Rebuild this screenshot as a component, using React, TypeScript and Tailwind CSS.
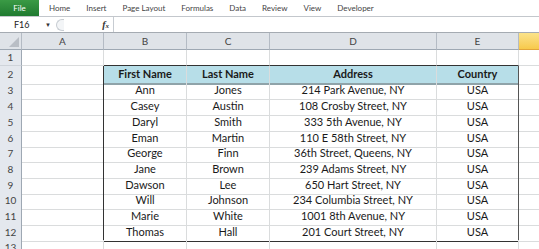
import React from 'react';

const tabs = ['Home', 'Insert', 'Page Layout', 'Formulas', 'Data', 'Review', 'View', 'Developer'];

const rows = [
  ['First Name', 'Last Name', 'Address', 'Country'],
  ['Ann', 'Jones', '214 Park Avenue, NY', 'USA'],
  ['Casey', 'Austin', '108 Crosby Street, NY', 'USA'],
  ['Daryl', 'Smith', '333 5th Avenue, NY', 'USA'],
  ['Eman', 'Martin', '110 E 58th Street, NY', 'USA'],
  ['George', 'Finn', '36th Street, Queens, NY', 'USA'],
  ['Jane', 'Brown', '239 Adams Street, NY', 'USA'],
  ['Dawson', 'Lee', '650 Hart Street, NY', 'USA'],
  ['Will', 'Johnson', '234 Columbia Street, NY', 'USA'],
  ['Marie', 'White', '1001 8th Avenue, NY', 'USA'],
  ['Thomas', 'Hall', '201 Court Street, NY', 'USA'],
];

// row heights in px, rows 1..13 (screenshot is scaled, so not all equal)
const heights = ['h-[16px]', 'h-[16px]', 'h-[16px]', 'h-[16px]', 'h-[16px]', 'h-[15px]', 'h-[16px]', 'h-[16px]', 'h-[15px]', 'h-[16px]', 'h-[16px]', 'h-[16px]', 'h-[16px]'];

const grid = 'grid grid-cols-[22px_82px_83px_83px_167px_82px_1fr]';
const font = { fontFamily: 'Lato, "Open Sans", sans-serif' };

const SheetRow = ({ n }: { n: number }) => {
  const data = n >= 2 && n <= 12 ? rows[n - 2] : null;
  const isHead = n === 2;
  const isLast = n === 12;

  const tableCell = (i: number) => {
    let cls = 'flex items-center justify-center text-[11px] text-[#1a1a1a] border-r ';
    cls += i === 3 ? 'border-r-[#555] ' : 'border-r-[#dadcdd] ';
    if (isHead) cls += 'bg-[#b7dee8] font-bold border-b-2 border-b-[#8fa3a9] ';
    else if (isLast) cls += 'border-b border-b-[#333] ';
    else cls += 'border-b border-b-[#dadcdd] ';
    return cls;
  };

  return (
    <div className={`${grid} ${heights[n - 1]}`}>
      <div className="flex items-center justify-center bg-[#e4e8ee] border-r border-r-[#9ea8b3] border-b border-b-[#cfd4da] text-[10px] text-[#444]">
        {n}
      </div>
      <div className={`border-b border-b-[#dadcdd] border-r ${data ? 'border-r-[#333]' : 'border-r-[#dadcdd]'}`} />
      {data
        ? data.map((v, i) => (
            <div key={i} className={tableCell(i)}>
              {v}
            </div>
          ))
        : [0, 1, 2, 3].map(i => (
            <div
              key={i}
              className={`border-r border-r-[#dadcdd] border-b ${n === 1 ? 'border-b-[#333]' : 'border-b-[#dadcdd]'}`}
            />
          ))}
      <div className="border-b border-b-[#dadcdd]" />
    </div>
  );
};

export default function App() {
  return (
    <div className="w-[539px] h-[249px] overflow-hidden bg-white" style={font}>
      {/* ribbon tabs */}
      <div className="flex items-stretch h-[17px] border-b border-b-[#c3c7cc] bg-white">
        <div className="w-[39px] flex items-center justify-center bg-gradient-to-b from-[#3a9a45] to-[#1f7a30] text-white text-[8px]">
          File
        </div>
        <div className="flex items-center ml-[2px]">
          {tabs.map(t => (
            <span key={t} className="px-2 text-[8px] text-[#444]">
              {t}
            </span>
          ))}
        </div>
      </div>

      {/* formula bar */}
      <div className="flex items-center h-[16px] bg-white border-b border-b-[#a5abb2]">
        <div className="w-[56px] flex items-center pl-[14px] text-[9px] text-[#222]">
          <span>F16</span>
          <span className="ml-auto mr-[5px] text-[6px] text-[#333]">▼</span>
        </div>
        <div className="h-[12px] w-[8px] rounded-l-full border border-r-0 border-[#c7ccd2] bg-[#f3f5f7]" />
        <div className="w-[49px] flex items-center justify-end pr-[4px]">
          <span className="text-[10px] italic font-bold text-[#333]" style={{ fontFamily: '"Liberation Serif", serif' }}>
            f<span className="text-[7px]">x</span>
          </span>
        </div>
        <div className="flex-1 h-full border-l border-l-[#c7ccd2]" />
      </div>

      {/* column headers */}
      <div className={`${grid} h-[17px] bg-[#dfe3e8] text-[10px] text-[#444]`}>
        <div className="relative border-r border-r-[#b4bbc4] border-b border-b-[#9ea8b3]">
          <div className="absolute right-[2px] bottom-[2px] w-0 h-0 border-l-[10px] border-l-transparent border-b-[10px] border-b-[#b9bec5]" />
        </div>
        {['A', 'B', 'C', 'D', 'E'].map(c => (
          <div key={c} className="flex items-center justify-center border-r border-r-[#b4bbc4] border-b border-b-[#9ea8b3]">
            {c}
          </div>
        ))}
        <div className="bg-gradient-to-b from-[#fbe38a] to-[#f7c94a] border-b border-b-[#e2a53a]" />
      </div>

      {Array.from({ length: 13 }, (_, i) => (
        <SheetRow key={i} n={i + 1} />
      ))}
    </div>
  );
}
